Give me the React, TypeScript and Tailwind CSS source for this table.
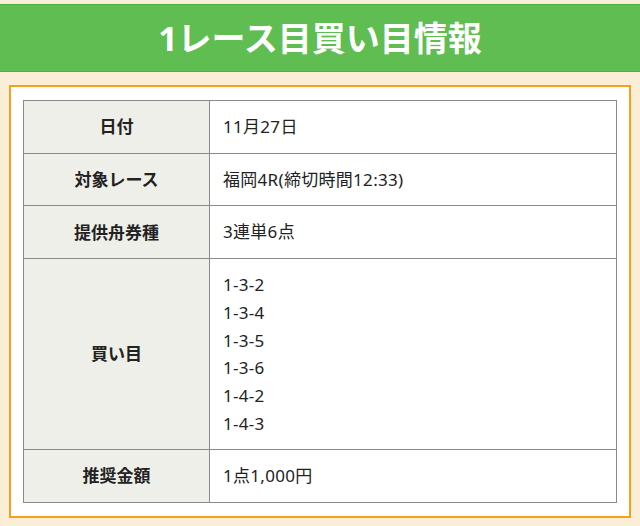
const rows: { label: string; values: string[] }[] = [
  { label: '日付', values: ['11月27日'] },
  { label: '対象レース', values: ['福岡4R(締切時間12:33)'] },
  { label: '提供舟券種', values: ['3連単6点'] },
  { label: '買い目', values: ['1-3-2', '1-3-4', '1-3-5', '1-3-6', '1-4-2', '1-4-3'] },
  { label: '推奨金額', values: ['1点1,000円'] },
];

export default function App() {
  return (
    <div
      className="w-[640px] h-[526px] overflow-hidden bg-[#faefd6] pt-[4px]"
      style={{ fontFamily: '"Noto Sans", "Noto Sans CJK JP", sans-serif' }}
    >
      <div className="h-[68px] bg-[#5fbd52] border-y border-[#50b046] flex items-center justify-center">
        <h1 className="text-[34px] font-bold text-white leading-none">1レース目買い目情報</h1>
      </div>

      <div className="mx-[9px] mt-[13px] border-2 border-[#f4a01c] bg-white px-[12px] py-[13px]">
        <table className="w-full border-collapse border border-[#8a8a8a] text-[17px] text-[#222]">
          <tbody>
            {rows.map((row) => (
              <tr key={row.label}>
                <th className="w-[186px] border border-[#8a8a8a] bg-[#efefe9] font-bold text-center align-middle">
                  {row.label}
                </th>
                <td className="border border-[#8a8a8a] px-[13px] py-[12px] leading-[27.7px] tracking-[0.3px] align-middle">
                  {row.values.map((v) => (
                    <div key={v}>{v}</div>
                  ))}
                </td>
              </tr>
            ))}
          </tbody>
        </table>
      </div>
    </div>
  );
}
